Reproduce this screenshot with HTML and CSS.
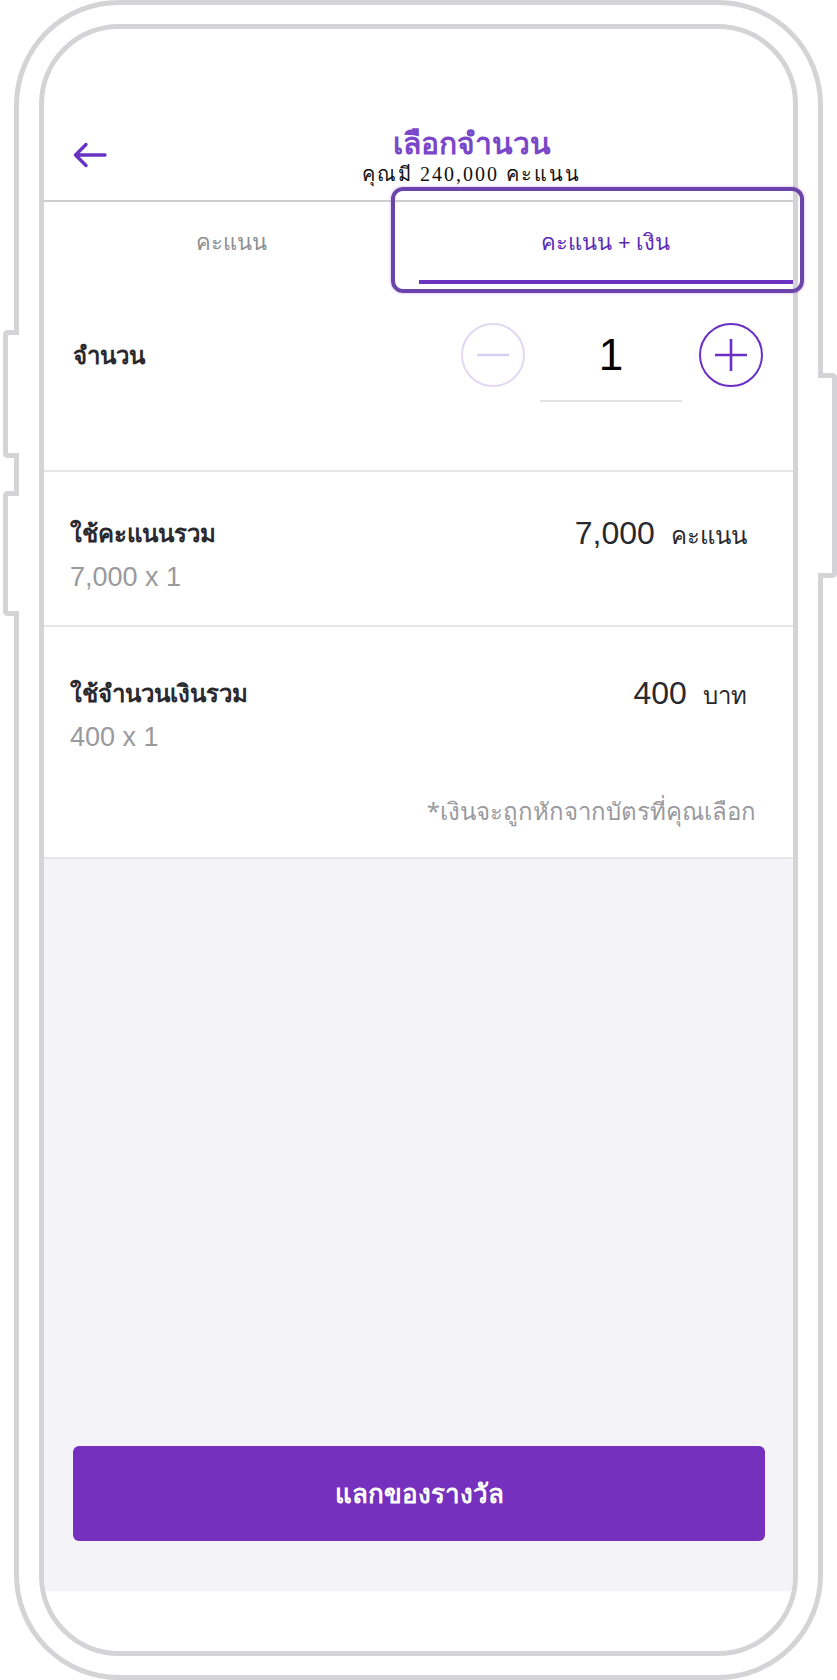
FILE: index.html
```html
<!DOCTYPE html>
<html lang="th">
<head>
  <meta charset="UTF-8">
  <meta name="viewport" content="width=device-width, initial-scale=1.0">
  <title>เลือกจำนวน</title>
  <link rel="stylesheet" href="styles.css">
</head>
<body>
  <div class="phone">
    <!-- ปุ่มข้างเครื่อง -->
    <div class="side-btn side-btn-1"></div>
    <div class="side-btn side-btn-2"></div>
    <div class="side-btn side-btn-r"></div>

    <div class="screen">
      <div class="header">
        <div class="back">
          <svg width="34" height="26" viewBox="0 0 34 26">
            <path d="M32 13H3M13 2.5L2.5 13L13 23.5" fill="none" stroke="#6a32c2" stroke-width="3.4" stroke-linecap="round" stroke-linejoin="round"/>
          </svg>
        </div>
        <div class="title-box">
          <div class="title">เลือกจำนวน</div>
          <div class="subtitle">คุณมี 240,000 คะแนน</div>
        </div>
      </div>

      <!-- แท็บ -->
      <div class="tabs">
        <div class="tab">คะแนน</div>
        <div class="tab active">คะแนน + เงิน</div>
      </div>

      <!-- จำนวน -->
      <div class="qty-row">
        <div class="qty-label">จำนวน</div>
        <div class="stepper">
          <div class="circle minus">
            <svg width="34" height="34" viewBox="0 0 34 34"><path d="M1 17H33" stroke="#d9ccf1" stroke-width="2.4"/></svg>
          </div>
          <div class="qty-num">1</div>
          <div class="circle plus">
            <svg width="34" height="34" viewBox="0 0 34 34"><path d="M1 17H33M17 1V33" stroke="#6a2fc4" stroke-width="2.6"/></svg>
          </div>
        </div>
      </div>

      <div class="sum-row">
        <div class="sum-label">ใช้คะแนนรวม</div>
        <div class="sum-value"><span class="num">7,000</span> <span class="unit">คะแนน</span></div>
        <div class="sum-sub">7,000 x 1</div>
      </div>

      <div class="sum-row money">
        <div class="sum-label">ใช้จำนวนเงินรวม</div>
        <div class="sum-value"><span class="num">400</span> <span class="unit">บาท</span></div>
        <div class="sum-sub">400 x 1</div>
        <div class="note">*เงินจะถูกหักจากบัตรที่คุณเลือก</div>
      </div>

      <div class="footer">
        <button class="redeem">แลกของรางวัล</button>
      </div>
      <div class="home-area"></div>
    </div>

    <!-- กรอบไฮไลต์ -->
    <div class="highlight"></div>
  </div>
</body>
</html>
```

FILE: styles.css
```css
body {
  margin: 0;
  background-color: #ffffff;
  font-family: "Noto Sans", sans-serif;
  color: #2a2a2e;
}

.phone {
  position: relative;
  box-sizing: border-box;
  width: 809px;
  height: 1680px;
  margin-left: 14px;
  padding: 19px 20px;
  border: 5px solid #d4d4d6;
  border-radius: 105px;
  background-color: #ffffff;
}

.side-btn {
  position: absolute;
  box-sizing: border-box;
  background-color: #ffffff;
  border: 5px solid #d4d4d6;
}

.side-btn-1,
.side-btn-2 {
  left: -16px;
  width: 16px;
  border-right: none;
  border-radius: 5px 0 0 5px;
}

.side-btn-1 {
  top: 325px;
  height: 128px;
}

.side-btn-2 {
  top: 486px;
  height: 125px;
}

.side-btn-r {
  right: -19px;
  top: 368px;
  width: 19px;
  height: 205px;
  border-left: none;
  border-radius: 0 5px 5px 0;
}

.screen {
  box-sizing: border-box;
  width: 759px;
  height: 1632px;
  border: 5px solid #d4d4d6;
  border-radius: 80px;
  overflow: hidden;
  display: flex;
  flex-direction: column;
  background-color: #ffffff;
}

/* หัว */
.header {
  display: flex;
  box-sizing: border-box;
  height: 173px;
  padding-top: 95px;
  border-bottom: 2px solid #cfcfd2;
}

.back {
  width: 77px;
  padding-left: 29px;
  padding-top: 18px;
}

.back svg {
  display: block;
}

.title-box {
  flex: 1;
  text-align: center;
}

.title {
  font-size: 30px;
  line-height: 38px;
  color: #7b47c9;
  font-weight: 600;
}

.subtitle {
  margin-top: 1px;
  font-family: "Liberation Serif", serif;
  font-size: 20px;
  line-height: 22px;
  letter-spacing: 2px;
  color: #111111;
}

/* แท็บ */
.tabs {
  display: flex;
  height: 82px;
}

.tab {
  flex: 1;
  display: flex;
  align-items: center;
  justify-content: center;
  box-sizing: border-box;
  padding-top: 2px;
  font-size: 22px;
  color: #8e8e93;
  border-bottom: 4px solid transparent;
}

.tab.active {
  color: #5b2cb5;
  border-bottom-color: #6a33c2;
}

/* จำนวน */
.qty-row {
  display: flex;
  justify-content: space-between;
  align-items: flex-start;
  padding: 39px 30px 68px 29px;
  border-bottom: 2px solid #e6e6e8;
}

.qty-label {
  font-size: 24px;
  line-height: 64px;
  font-weight: 600;
}

.stepper {
  display: flex;
  align-items: flex-start;
}

.circle {
  box-sizing: border-box;
  width: 64px;
  height: 64px;
  border-radius: 50%;
  display: flex;
  align-items: center;
  justify-content: center;
}

.minus {
  border: 2px solid #e2d8f3;
}

.plus {
  border: 2.5px solid #6a2fc4;
}

.qty-num {
  width: 142px;
  margin: 0 17px 0 15px;
  padding-bottom: 13px;
  border-bottom: 2px solid #e2e2e4;
  text-align: center;
  font-family: "Liberation Sans", sans-serif;
  font-size: 44px;
  line-height: 64px;
  color: #000000;
}

/* สรุป */
.sum-row {
  display: grid;
  grid-template-columns: 1fr auto;
  padding: 43px 46px 27px 26px;
  border-bottom: 2px solid #e6e6e8;
}

.sum-label {
  font-size: 24px;
  line-height: 36px;
  font-weight: 600;
}

.sum-value {
  grid-row: 1;
  grid-column: 2;
  line-height: 36px;
  white-space: nowrap;
}

.sum-value .num {
  font-family: "Liberation Sans", sans-serif;
  font-size: 32px;
  margin-right: 12px;
}

.sum-value .unit {
  font-size: 24px;
}

.sum-sub {
  grid-column: 1;
  font-family: "Liberation Sans", sans-serif;
  font-size: 27px;
  line-height: 42px;
  color: #9a9a9e;
}

.note {
  grid-column: 1 / 3;
  margin-top: 34px;
  margin-right: -9px;
  text-align: right;
  font-size: 24px;
  color: #9a9a9e;
}

.money {
  padding-top: 48px;
  padding-bottom: 26px;
}

/* ปุ่ม */
.footer {
  flex: 1;
  display: flex;
  flex-direction: column;
  justify-content: flex-end;
  padding: 0 28px 50px 29px;
  background-color: #f4f3f7;
}

.redeem {
  height: 95px;
  border: none;
  border-radius: 6px;
  background-color: #7530bd;
  color: #ffffff;
  font-family: inherit;
  font-size: 26px;
  font-weight: 600;
  cursor: pointer;
}

.home-area {
  height: 60px;
}

.highlight {
  position: absolute;
  left: 372px;
  top: 182px;
  width: 413px;
  height: 106px;
  box-sizing: border-box;
  border: 4px solid #6b45aa;
  border-radius: 12px;
  box-shadow: 0 0 3px rgba(150, 90, 220, 0.5);
}
```
